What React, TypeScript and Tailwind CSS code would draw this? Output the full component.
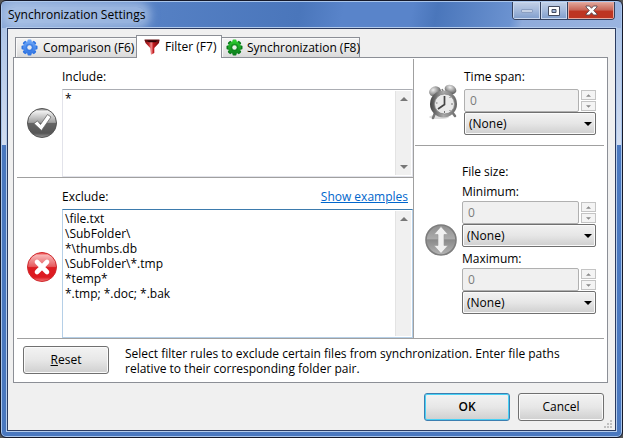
import { useId, useState, type ReactNode } from "react";

function Gear({ color, light, hole }: { color: string; light: string; hole: string }) {
  const id = useId();
  return (
    <svg width="17" height="17" viewBox="0 0 17 17" aria-hidden="true" className="shrink-0">
      <defs>
        <linearGradient id={id} gradientUnits="userSpaceOnUse" x1="0" y1="1" x2="0" y2="16">
          <stop offset="0" stopColor={light} />
          <stop offset="1" stopColor={color} />
        </linearGradient>
      </defs>
      {[0, 45, 90, 135].map((a) => (
        <rect key={a} x="6.500" y="0.5" width="4" height="16" rx="1" fill={a === 0 ? `url(#${id})` : color} transform={`rotate(${a} 8.5 8.5)`} />
      ))}
      <circle cx="8.500" cy="8.500" r="6.500" fill={`url(#${id})`} />
      <circle cx="8.500" cy="8.500" r="3.800" fill={color} opacity="0.6" />
      <circle cx="8.500" cy="8.500" r="2.200" fill={hole} />
    </svg>
  );
}

function Funnel() {
  return (
    <svg width="16" height="16" viewBox="0 0 16 16" aria-hidden="true" className="shrink-0">
      <defs>
        <linearGradient id="funnel">
          <stop offset="0" stopColor="#7d0b0e" />
          <stop offset="0.3" stopColor="#c42a2d" />
          <stop offset="0.45" stopColor="#f08a8a" />
          <stop offset="0.6" stopColor="#c01a1e" />
          <stop offset="1" stopColor="#6a0508" />
        </linearGradient>
      </defs>
      <path d="M0.5 1l15 0-.5 3-4.700 5v5L7 15.800 6.200 9 1.500 4z" fill="url(#funnel)" />
      <path d="M0.5 0.600h15l-1 2.400h-13z" fill="#6a1214" />
      <path d="M3 1.400h10.500L11.500 3.200H5z" fill="#2a0305" />
    </svg>
  );
}

function CheckIcon() {
  return (
    <svg width="32" height="32" viewBox="0 0 32 32" aria-hidden="true">
      <defs>
        <linearGradient id="chk" x1="0" y1="0" x2="0" y2="1">
          <stop offset="0" stopColor="#777" />
          <stop offset="0.1" stopColor="#f0f0f0" />
          <stop offset="0.48" stopColor="#a0a0a0" />
          <stop offset="0.5" stopColor="#666" />
          <stop offset="0.85" stopColor="#565656" />
          <stop offset="1" stopColor="#999" />
        </linearGradient>
      </defs>
      <circle cx="16" cy="16" r="14.500" fill="url(#chk)" stroke="#555" />
      <path d="M8 16.500l3.500-2.600 3 3.600L21.500 7.500l3.500 2.500-9.500 13.500z" fill="#fff" stroke="#666" strokeWidth="0.8" />
    </svg>
  );
}

function CrossIcon() {
  return (
    <svg width="32" height="32" viewBox="0 0 32 32" aria-hidden="true">
      <defs>
        <linearGradient id="crs" x1="0" y1="0" x2="0" y2="1">
          <stop offset="0" stopColor="#e33" />
          <stop offset="0.1" stopColor="#f7b4b4" />
          <stop offset="0.48" stopColor="#e65b5f" />
          <stop offset="0.52" stopColor="#dc1c22" />
          <stop offset="0.85" stopColor="#dd1a20" />
          <stop offset="1" stopColor="#f47a7a" />
        </linearGradient>
      </defs>
      <circle cx="16" cy="16" r="14.500" fill="url(#crs)" stroke="#cf2a2e" />
      <path d="M11 11l10 10M21 11L11 21" stroke="#fff" strokeWidth="4.600" strokeLinecap="round" />
    </svg>
  );
}

function SizeIcon() {
  return (
    <svg width="32" height="32" viewBox="0 0 32 32" aria-hidden="true">
      <defs>
        <linearGradient id="sz" x1="0" y1="0" x2="0" y2="1">
          <stop offset="0" stopColor="#8e8e8e" />
          <stop offset="0.45" stopColor="#ababab" />
          <stop offset="0.5" stopColor="#8a8a8a" />
          <stop offset="1" stopColor="#b4b4b4" />
        </linearGradient>
      </defs>
      <circle cx="16" cy="16" r="15" fill="url(#sz)" stroke="#7d7d7d" strokeWidth="1.600" />
      <path d="M16 2.500l7 8h-4v11h4l-7 8-7-8h4v-11H9z" fill="#f0f0f0" stroke="#999" strokeWidth="0.6" />
    </svg>
  );
}

function ClockIcon() {
  return (
    <svg width="30" height="36" viewBox="0 0 30 36" aria-hidden="true">
      <defs>
        <radialGradient id="bell" cx="0.4" cy="0.3" r="0.8">
          <stop offset="0" stopColor="#eee" />
          <stop offset="0.5" stopColor="#999" />
          <stop offset="1" stopColor="#444" />
        </radialGradient>
        <linearGradient id="rim">
          <stop offset="0" stopColor="#444" />
          <stop offset="0.5" stopColor="#aaa" />
          <stop offset="1" stopColor="#666" />
        </linearGradient>
      </defs>
      <ellipse cx="11" cy="33" rx="10" ry="2" fill="#ddd" />
      <path d="M7 29l-2 5M24 28l3 4" stroke="#777" strokeWidth="2.500" strokeLinecap="round" />
      <path d="M14 5l2 4" stroke="#777" strokeWidth="1.500" />
      <ellipse cx="7" cy="7.500" rx="6" ry="5" fill="url(#bell)" transform="rotate(-20 7 7.5)" />
      <ellipse cx="22.500" cy="5.500" rx="6" ry="4.500" fill="url(#bell)" transform="rotate(22 22.5 5.5)" />
      <circle cx="15.500" cy="20" r="13.500" fill="url(#rim)" />
      <circle cx="16.500" cy="20" r="10" fill="#e9e9e9" stroke="#888" strokeWidth="0.8" />
      <path d="M16.500 12v8.500l-6.500 4.500" fill="none" stroke="#444" strokeWidth="1.700" />
      <path d="M23 20h2M16.500 27v2M21.500 14l1-1M21.500 26l1 1M8 19h1.500" stroke="#777" />
    </svg>
  );
}

function Triangle({ up = false, small = false }: { up?: boolean; small?: boolean }) {
  return (
    <svg width={small ? 5 : 8} height={small ? 3 : 4} viewBox="0 0 8 4" aria-hidden="true">
      <path d={up ? "M4 0l4 4H0z" : "M0 0h8L4 4z"} fill={small ? "#8a8a8a" : "#777"} />
    </svg>
  );
}

function Patterns({ label, value, focused = false, className, link }: { label: string; value: string; focused?: boolean; className: string; link?: ReactNode }) {
  const id = useId();
  const [text, setText] = useState(value);
  return (
    <div className={`flex min-w-0 flex-col ${className}`}>
      <div className="mb-1 flex justify-between pr-[5px]">
        <label htmlFor={id}>{label}</label>
        {link}
      </div>
      <div className={`flex flex-1 border p-px ${focused ? "border-[#b5cfe7] border-t-[#3d7bad]" : "border-[#e2e3ea] border-t-[#abadb3]"}`}>
        <textarea id={id} value={text} onChange={(e) => setText(e.target.value)} className="min-w-0 flex-1 resize-none overflow-hidden px-px leading-[15px] outline-none" />
        <div className="flex w-4 flex-col items-center justify-between border-l border-[#e3e3e3] bg-[#f0f0f0]">
          <button type="button" aria-label="Scroll up" className="flex h-4 w-full items-center justify-center"><Triangle up /></button>
          {!focused && <button type="button" aria-label="Scroll down" className="flex h-4 w-full items-center justify-center"><Triangle /></button>}
        </div>
      </div>
    </div>
  );
}

function Limit({ label, tight = false }: { label: string; tight?: boolean }) {
  const id = useId();
  const spin = "flex h-[10px] w-[15px] items-center justify-center border border-[#c4c4c4] bg-[#f4f4f4]";
  return (
    <div className="min-w-0">
      <label htmlFor={id} className={`block h-4 ${tight ? "mb-px" : "mb-1"}`}>{label}</label>
      <div className="flex items-center gap-[2px]">
        <input id={id} disabled defaultValue="0" className="h-[23px] w-0 min-w-0 flex-1 rounded-[2px] border border-[#b0b0b0] bg-[#f0f0f0] px-[5px] text-[#7c7c7c]" />
        <div className="flex shrink-0 flex-col gap-px">
          <button type="button" disabled aria-label={`Increase ${label}`} className={spin}><Triangle up small /></button>
          <button type="button" disabled aria-label={`Decrease ${label}`} className={spin}><Triangle small /></button>
        </div>
      </div>
      <div className="relative">
        <select aria-label={`${label} unit`} className="block h-[23px] w-full appearance-none rounded-[2px] border border-[#707070] bg-linear-to-b from-[#f2f2f2] from-0% via-[#e6e6e6] via-50% to-[#cfcfcf] px-1 leading-[20px] shadow-[inset_0_0_0_1px_#fafafa]">
          <option>(None)</option>
        </select>
        <svg className="pointer-events-none absolute top-[10px] right-1" width="8" height="4" viewBox="0 0 8 4" aria-hidden="true"><path d="M0 0h8L4 4z" fill="#000" /></svg>
      </div>
    </div>
  );
}

function PushButton({ children, primary = false }: { children: ReactNode; primary?: boolean }) {
  return (
    <button type="button" className={`h-7 w-[86px] shrink-0 rounded-[3px] border bg-linear-to-b from-[#f3f3f3] from-0% via-[#e7e7e7] via-50% to-[#cfcfcf] ${primary ? "border-[#3c7fb1] font-semibold shadow-[inset_0_0_0_1px_#48d1f5]" : "border-[#707070] shadow-[inset_0_0_0_1px_#fafafa]"}`}>
      {children}
    </button>
  );
}

export default function App() {
  const tab = "flex h-5 items-center border border-b-0 border-[#8c8f96] bg-linear-to-b from-[#f3f3f3] from-0% via-[#ebebeb] via-50% to-[#dadada] whitespace-nowrap shadow-[inset_1px_1px_0_#fafafa]";
  const caption = "flex h-full items-center justify-center border-r border-[#33415e] bg-linear-to-b from-[#c3d0e6] from-0% via-[#a6bbdc] via-45% to-[#7f9dcb] shadow-[inset_0_0_0_1px_#c9d7ed]";
  return (
    <div className="h-screen bg-[#555] font-['Open_Sans','Noto_Sans',sans-serif] text-[12px] leading-4 text-black">
      <main className="flex h-full flex-col overflow-hidden rounded-[6px] border border-[#15192a] bg-linear-to-b from-[#a7bfe4] from-0% via-[#d2ddf0] via-33% to-[#4a78bf] to-33% px-[6px] pb-[6px] shadow-[inset_0_0_0_1px_#a9c5eb]">
        <header className="-mx-[5px] mt-px flex h-[26px] shrink-0 items-start justify-between bg-[linear-gradient(100deg,#89a8d8_0%,#5580c4_25%,#4a76bb_48%,#5984ca_55%,#5984ca_66%,#4a76bb_70%,#6b92d0_82%,#8fabdb_84%,#9ab4e0_100%)] pr-[6px] pl-[6px]">
          <h1 className="mt-[5px] rounded-full bg-[#bdd0ec]/60 text-[12px] shadow-[0_0_8px_6px_rgba(189,208,236,0.6)]">Synchronization Settings</h1>
          <div className="flex h-[18px] overflow-hidden rounded-b-[4px] border border-t-0 border-[#33415e]">
            <button type="button" aria-label="Minimize" disabled className={`w-7 ${caption}`}>
              <svg width="12" height="4" aria-hidden="true"><rect x="0.5" y="0.5" width="11" height="3" rx="0.5" fill="#c5d1e4" stroke="#8b9fc1" /></svg>
            </button>
            <button type="button" aria-label="Maximize" className={`w-[27px] ${caption}`}>
              <svg width="12" height="10" aria-hidden="true"><path fillRule="evenodd" d="M0.5 0.5h11v9H0.5zM4 3.500h4v3H4z" fill="#fff" stroke="#444c60" /></svg>
            </button>
            <button type="button" aria-label="Close" className="flex h-full w-[46px] items-center justify-center bg-linear-to-b from-[#e2a99e] from-0% via-[#c8685a] via-45% to-[#bd3522] to-55% shadow-[inset_0_0_0_1px_#e7aaa0]">
              <svg width="13" height="11" viewBox="0 0 13 11" aria-hidden="true"><path d="M1 1h3.500l2 2.300L8.500 1H12v1L8.700 5.500 12 9v1H8.500l-2-2.300-2 2.300H1V9l3.300-3.500L1 2z" fill="#fff" stroke="#5a4750" strokeWidth="0.9" /></svg>
            </button>
          </div>
        </header>
        <div className="flex min-h-0 flex-1 flex-col border border-[#2b3b60] bg-[#f0f0f0] pr-[7px] pl-[5px] shadow-[0_0_0_1px_#b4cbeb]">
          <nav role="tablist" className="flex h-7 shrink-0 items-end pl-[2px]">
            <button type="button" role="tab" aria-selected="false" className={`${tab} w-[121px] gap-[5px] border-r-0 pl-[5px]`}>
              <Gear color="#2f74e2" light="#70a8f8" hole="#e6e9ef" />Comparison (F6)
            </button>
            <button type="button" role="tab" aria-selected="true" className="z-10 -mb-px flex h-[23px] w-[86px] items-center gap-[5px] border border-b-0 border-[#8c8f96] bg-white pb-px pl-[7px] whitespace-nowrap">
              <Funnel />Filter (F7)
            </button>
            <button type="button" role="tab" aria-selected="false" className={`${tab} w-[138px] gap-1 border-l-0 pl-1`}>
              <Gear color="#0b7a1c" light="#2dd02f" hole="#e8f0e8" />Synchronization (F8)
            </button>
          </nav>
          <section className="flex min-h-0 flex-1 flex-col border border-[#8c8f96] bg-white px-[3px]">
            <div className="flex min-h-0 flex-1 border-b border-[#a0a0a0] pt-px">
              <div className="flex min-w-0 flex-1 flex-col border-r border-[#a0a0a0]">
                <div className="flex border-b border-[#a0a0a0]">
                  <div className="flex w-[45px] shrink-0 justify-center pt-[48px] pl-1"><CheckIcon /></div>
                  <Patterns label="Include:" value="*" className="h-[118px] flex-1 pt-[10px]" />
                </div>
                <div className="flex min-h-0 flex-1">
                  <div className="flex w-[45px] shrink-0 justify-center pt-[73px] pl-1"><CrossIcon /></div>
                  <Patterns
                    label="Exclude:"
                    value={"\\file.txt\n\\SubFolder\\\n*\\thumbs.db\n\\SubFolder\\*.tmp\n*temp*\n*.tmp; *.doc; *.bak"}
                    focused
                    className="flex-1 pt-[11px]"
                    link={<a href="#examples" className="text-[#0066cc] underline">Show examples</a>}
                  />
                </div>
              </div>
              <div className="ml-px flex w-[189px] shrink-0 flex-col">
                <div className="flex gap-[6px] border-b border-[#a0a0a0] pt-[10px] pr-2 pb-[10px] pl-[13px]">
                  <div className="mt-[15px] w-[30px] shrink-0"><ClockIcon /></div>
                  <div className="min-w-0 flex-1"><Limit label="Time span:" /></div>
                </div>
                <fieldset className="flex gap-[5px] pt-[18px] pr-2 pl-[10px]">
                  <div className="mt-[60px] w-8 shrink-0"><SizeIcon /></div>
                  <div className="flex min-w-0 flex-1 flex-col gap-1">
                    <span>File size:</span>
                    <Limit label="Minimum:" tight />
                    <Limit label="Maximum:" tight />
                  </div>
                </fieldset>
              </div>
            </div>
            <div className="flex h-[43px] shrink-0 items-start gap-4 pt-[7px] pl-[6px]">
              <PushButton><span className="underline">R</span>eset</PushButton>
              <p className="max-w-[450px] leading-[15px]">Select filter rules to exclude certain files from synchronization. Enter file paths relative to their corresponding folder pair.</p>
            </div>
          </section>
          <footer className="flex h-[47px] shrink-0 items-start justify-end gap-2 pt-[10px] pr-1">
            <PushButton primary>OK</PushButton>
            <PushButton>Cancel</PushButton>
            <svg className="-mr-2 -ml-2 self-end" width="8" height="10" viewBox="0 0 8 10" aria-hidden="true">
              <path d="M6 0h2v2H6zM3 3h2v2H3zM6 3h2v2H6zM0 6h2v2H0zM3 6h2v2H3zM6 6h2v2H6z" fill="#c0c0c0" />
            </svg>
          </footer>
        </div>
      </main>
    </div>
  );
}
